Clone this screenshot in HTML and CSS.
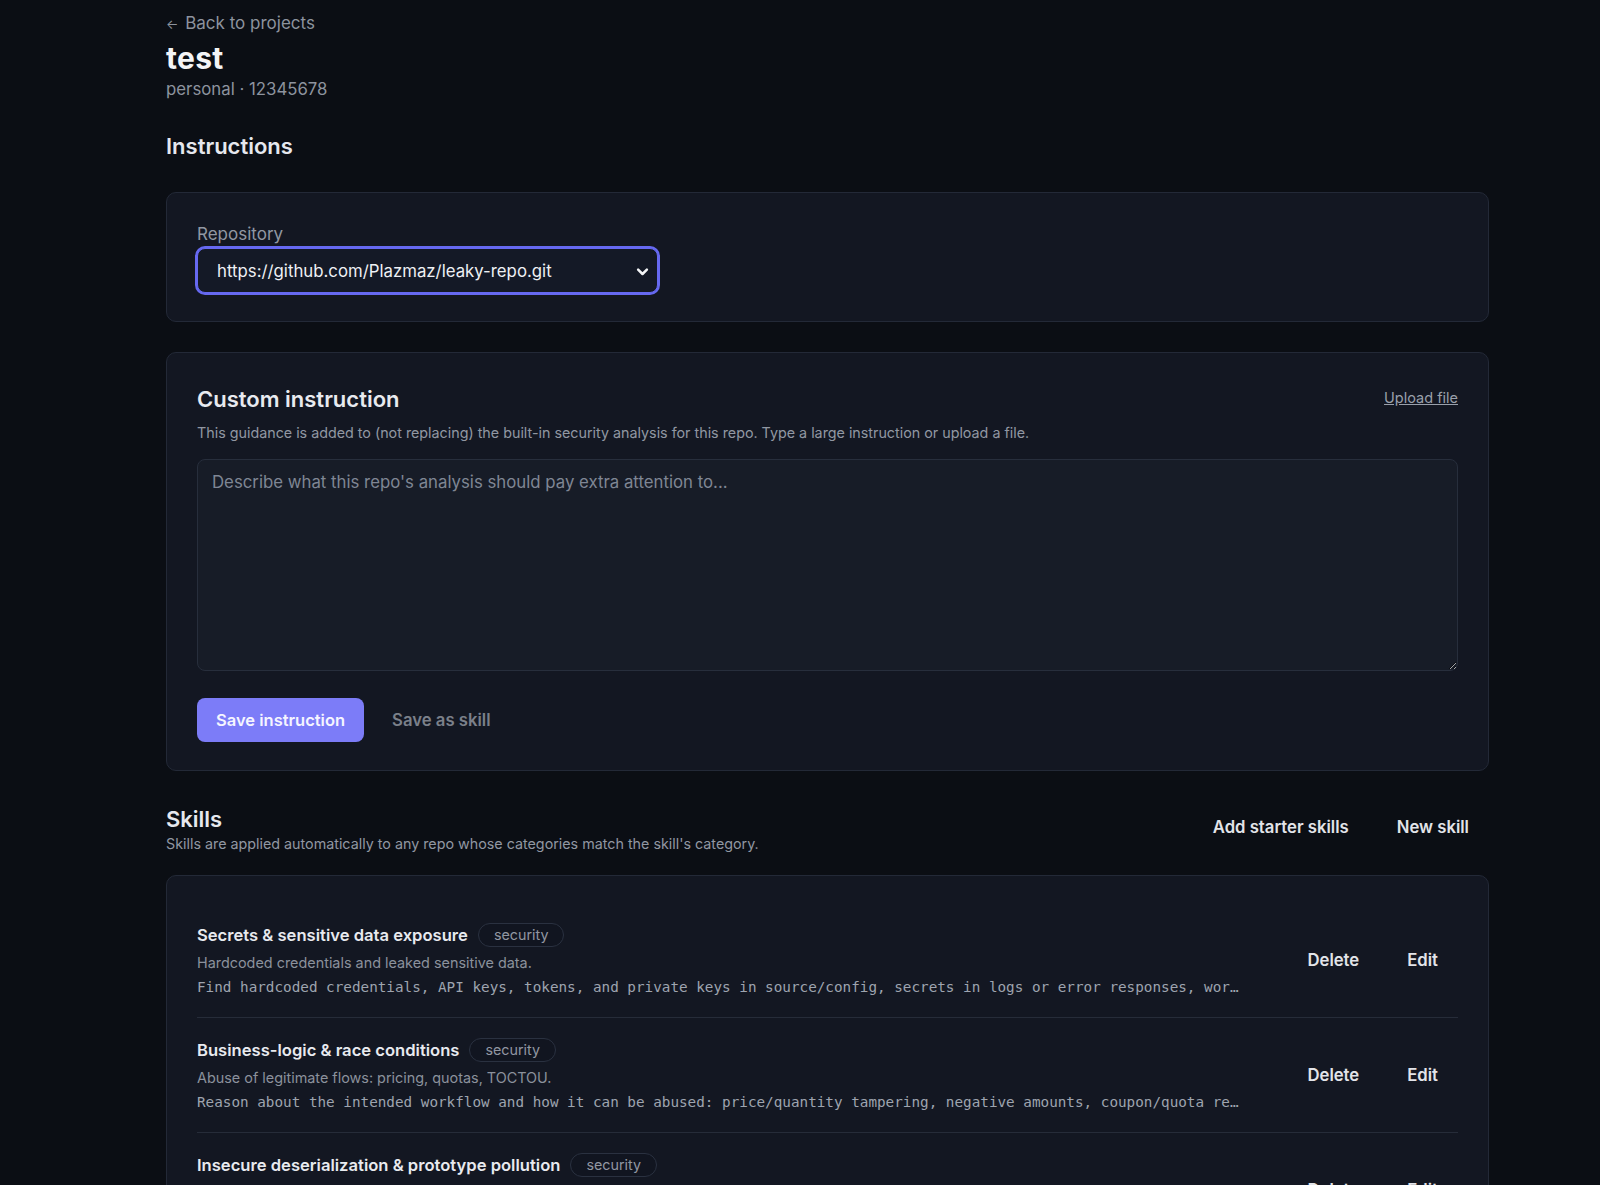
FILE: index.html
```html
<!DOCTYPE html>
<html lang="en">
<head>
<meta charset="UTF-8">
<meta name="viewport" content="width=device-width, initial-scale=1.0">
<title>test · Project</title>
<link rel="stylesheet" href="styles.css">
</head>
<body>
<main class="page">
  <a class="back" href="#"><span class="back-arrow">←</span> Back to projects</a>
  <h1 class="title">test</h1>
  <p class="meta">personal · 12345678</p>

  <h2 class="section-title">Instructions</h2>

  <section class="card repo-card">
    <label class="field-label" for="repo">Repository</label>
    <div class="select-wrap">
      <select id="repo" class="select">
        <option>https://github.com/Plazmaz/leaky-repo.git</option>
      </select>
      <svg class="select-chevron" width="15" height="15" viewBox="0 0 24 24" fill="none" stroke="currentColor" stroke-width="4" stroke-linecap="round" stroke-linejoin="round"><path d="M5 9l7 7 7-7"/></svg>
    </div>
  </section>

  <section class="card instruction-card">
    <div class="card-head">
      <h3 class="card-title">Custom instruction</h3>
      <a class="link" href="#">Upload file</a>
    </div>
    <p class="hint">This guidance is added to (not replacing) the built-in security analysis for this repo. Type a large instruction or upload a file.</p>
    <textarea class="textarea" placeholder="Describe what this repo's analysis should pay extra attention to..."></textarea>
    <div class="actions">
      <button class="btn-primary" type="button">Save instruction</button>
      <button class="btn-ghost muted" type="button">Save as skill</button>
    </div>
  </section>

  <div class="skills-head">
    <div>
      <h2 class="section-title skills-title">Skills</h2>
      <p class="hint skills-hint">Skills are applied automatically to any repo whose categories match the skill's category.</p>
    </div>
    <div class="head-actions">
      <button class="btn-ghost" type="button">Add starter skills</button>
      <button class="btn-ghost" type="button">New skill</button>
    </div>
  </div>

  <section class="card skill-list">
    <div class="skill">
      <div class="skill-body">
        <div class="skill-title-row">
          <span class="skill-name">Secrets &amp; sensitive data exposure</span>
          <span class="tag">security</span>
        </div>
        <p class="skill-desc">Hardcoded credentials and leaked sensitive data.</p>
        <p class="skill-prompt">Find hardcoded credentials, API keys, tokens, and private keys in source/config, secrets in logs or error responses, world-readable config files, and sensitive data returned to clients.</p>
      </div>
      <div class="skill-actions">
        <button class="btn-ghost" type="button">Delete</button>
        <button class="btn-ghost" type="button">Edit</button>
      </div>
    </div>

    <div class="skill">
      <div class="skill-body">
        <div class="skill-title-row">
          <span class="skill-name">Business-logic &amp; race conditions</span>
          <span class="tag">security</span>
        </div>
        <p class="skill-desc">Abuse of legitimate flows: pricing, quotas, TOCTOU.</p>
        <p class="skill-prompt">Reason about the intended workflow and how it can be abused: price/quantity tampering, negative amounts, coupon/quota reuse, and races between check and use.</p>
      </div>
      <div class="skill-actions">
        <button class="btn-ghost" type="button">Delete</button>
        <button class="btn-ghost" type="button">Edit</button>
      </div>
    </div>

    <div class="skill">
      <div class="skill-body">
        <div class="skill-title-row">
          <span class="skill-name">Insecure deserialization &amp; prototype pollution</span>
          <span class="tag">security</span>
        </div>
        <p class="skill-desc">Unsafe parsing of untrusted data and object merges.</p>
        <p class="skill-prompt">Look for untrusted input passed to deserializers, eval-like parsers, and deep merge helpers that allow __proto__ or constructor keys.</p>
      </div>
      <div class="skill-actions">
        <button class="btn-ghost" type="button">Delete</button>
        <button class="btn-ghost" type="button">Edit</button>
      </div>
    </div>
  </section>
</main>
</body>
</html>
```

FILE: styles.css
```css
* {
    box-sizing: border-box;
}

html {
    scrollbar-width: none;
}

body {
    margin: 0;
    background-color: #0b0e14;
    color: #e6e8ee;
    font-family: Inter, "Noto Sans", sans-serif;
}

.page {
    width: 1323px;
    margin-left: 166px;
    padding: 12px 0 40px;
}

.back {
    display: block;
    font-size: 17px;
    line-height: 22px;
    color: #8d939e;
    text-decoration: none;
}

.back-arrow {
    font-size: 13px;
    margin-right: 2px;
}

.title {
    margin: 5px 0 0;
    font-size: 30px;
    line-height: 36px;
    font-weight: 700;
    letter-spacing: 0.3px;
    color: #f3f4f6;
}

.meta {
    margin: 1px 0 0;
    font-size: 16.8px;
    line-height: 24px;
    color: #8d939e;
}

.section-title {
    margin: 31px 0 0;
    font-size: 22px;
    line-height: 28px;
    font-weight: 600;
    color: #e6e8ee;
}

/* cards */
.card {
    background-color: #131722;
    border: 1px solid #232937;
    border-radius: 10px;
    padding: 30px 30px 28px;
}

.repo-card {
    margin-top: 32px;
}

.field-label {
    display: block;
    font-size: 17px;
    line-height: 22px;
    color: #9197a2;
}

.select-wrap {
    position: relative;
    width: 461px;
    margin-top: 3px;
}

.select {
    appearance: none;
    display: block;
    width: 100%;
    height: 45px;
    padding: 0 40px 0 19px;
    background-color: #141926;
    border: 1px solid #6669f1;
    box-shadow: 0 0 0 2px #6669f1;
    border-radius: 8px;
    color: #eef0f4;
    font-family: Inter, "Noto Sans", sans-serif;
    font-size: 16.8px;
    outline: none;
}

.select-chevron {
    position: absolute;
    right: 8px;
    top: 50%;
    margin-top: -7px;
    color: #f3f4f6;
    pointer-events: none;
}

.instruction-card {
    margin-top: 30px;
    padding: 32px 30px 28px;
}

.card-head {
    display: flex;
    justify-content: space-between;
    align-items: center;
}

.card-title {
    margin: 0;
    font-size: 22px;
    line-height: 28px;
    font-weight: 600;
    color: #e8eaef;
}

.link {
    font-size: 14.5px;
    color: #9aa0ab;
    text-decoration: underline;
    margin-top: -4px;
}

.hint {
    margin: 10px 0 0;
    font-size: 14.3px;
    line-height: 20px;
    color: #9197a2;
}

.textarea {
    display: block;
    width: 100%;
    height: 212px;
    margin-top: 16px;
    padding: 10px 14px;
    background-color: #171c27;
    border: 1px solid #272e3c;
    border-radius: 8px;
    color: #e6e8ee;
    font-family: Inter, "Noto Sans", sans-serif;
    font-size: 16.8px;
    line-height: 24px;
    resize: vertical;
    outline: none;
}

.textarea::placeholder {
    color: #7f8694;
}

.actions {
    display: flex;
    align-items: center;
    gap: 8px;
    margin-top: 27px;
}

button {
    font-family: Inter, "Noto Sans", sans-serif;
    cursor: pointer;
}

.btn-primary {
    height: 44px;
    padding: 0 19px;
    background-color: #7c7cf8;
    border: none;
    border-radius: 8px;
    color: #f5f5ff;
    font-size: 16.5px;
    font-weight: 600;
}

.btn-ghost {
    height: 40px;
    padding: 0 20px;
    background: none;
    border: none;
    color: #e2e4e9;
    font-size: 16.7px;
    font-weight: 600;
}

.btn-ghost.muted {
    color: #7b808a;
}

/* skills */
.skills-head {
    display: flex;
    justify-content: space-between;
    align-items: center;
    margin-top: 34px;
}

.skills-title {
    margin-top: 0;
}

.skills-hint {
    margin-top: 2px;
    line-height: 18px;
}

.head-actions {
    display: flex;
    gap: 8px;
    margin-top: -4px;
}

.skill-list {
    margin-top: 22px;
    padding: 27px 30px 0;
}

.skill {
    display: flex;
    align-items: center;
    gap: 48px;
    padding: 20px 0;
    border-bottom: 1px solid #262c39;
}

.skill:last-child {
    border-bottom: none;
}

.skill-body {
    flex: 1;
    min-width: 0;
}

.skill-title-row {
    display: flex;
    align-items: center;
    gap: 10px;
    height: 24px;
}

.skill-name {
    font-size: 16.6px;
    line-height: 24px;
    font-weight: 600;
    color: #e8eaef;
}

.tag {
    font-size: 14.3px;
    line-height: 22px;
    padding: 0 15px;
    border: 1px solid #2a3140;
    border-radius: 999px;
    color: #9197a2;
    background-color: #111520;
}

.skill-desc {
    margin: 6px 0 0;
    font-size: 14.4px;
    line-height: 20px;
    color: #8b919c;
}

.skill-prompt {
    margin: 4px 0 0;
    font-family: "DejaVu Sans Mono", "Liberation Mono", monospace;
    font-size: 14.3px;
    line-height: 20px;
    color: #9ea4af;
    white-space: nowrap;
    overflow: hidden;
    text-overflow: ellipsis;
}

.skill-actions {
    display: flex;
    gap: 8px;
}
```
